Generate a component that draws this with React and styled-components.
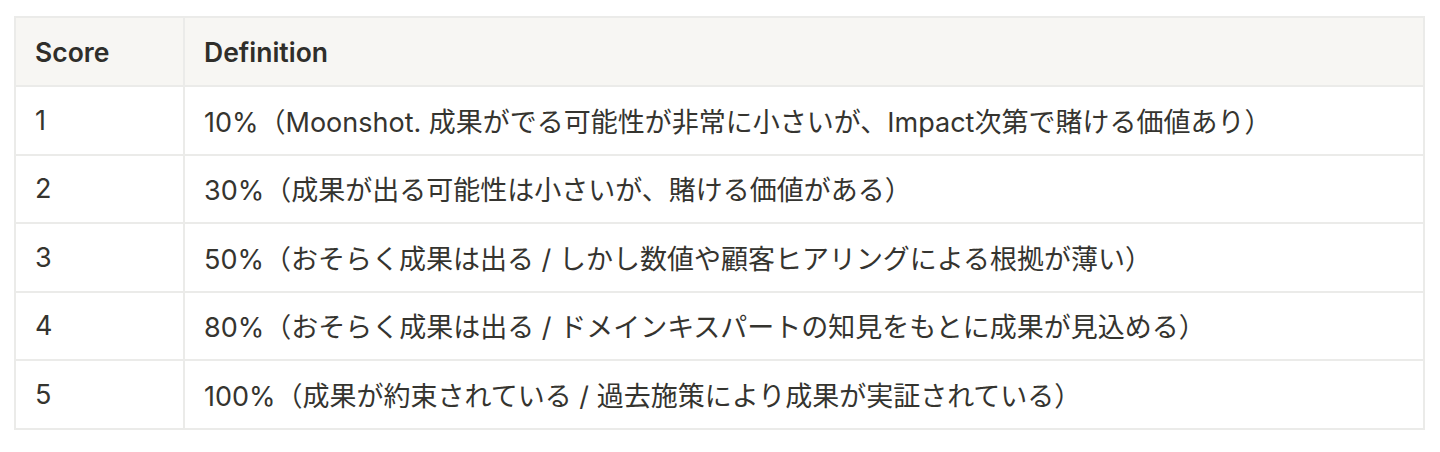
import React from "react";
import styled, { createGlobalStyle } from "styled-components";

const Global = createGlobalStyle`
  html, body { margin: 0; padding: 0; background: #ffffff; }
  body {
    font-family: Inter, "Noto Sans CJK JP", sans-serif;
    color: #37352f;
    -webkit-font-smoothing: antialiased;
  }
`;

const Page = styled.div`
  padding: 16px 15px 0 14px;
`;

const Table = styled.table`
  width: 100%;
  border-collapse: collapse;
  table-layout: fixed;
  border: 2px solid #ebebe9;
`;

const Col = styled.col`
  width: ${(p) => p.$w || "auto"};
`;

const HeadCell = styled.th`
  background: #f7f6f3;
  font-weight: 600;
  text-align: left;
  font-size: 26.5px;
  height: 67px;
  padding: 0 19px;
  border: 2px solid #ebebe9;
  color: #2f2e2a;
`;

const Cell = styled.td`
  font-size: 27px;
  font-weight: 400;
  height: 66.5px;
  padding: 0 19px;
  border: 2px solid #ebebe9;
  white-space: nowrap;
  color: #35342f;
`;

const rows = [
  ["1", "10%（Moonshot. 成果がでる可能性が非常に小さいが、Impact次第で賭ける価値あり）"],
  ["2", "30%（成果が出る可能性は小さいが、賭ける価値がある）"],
  ["3", "50%（おそらく成果は出る / しかし数値や顧客ヒアリングによる根拠が薄い）"],
  ["4", "80%（おそらく成果は出る / ドメインキスパートの知見をもとに成果が見込める）"],
  ["5", "100%（成果が約束されている / 過去施策により成果が実証されている）"],
];

export default function App() {
  return (
    <Page>
      <Global />
      <Table>
        <colgroup>
          <Col $w="169px" />
          <Col />
        </colgroup>
        <thead>
          <tr>
            <HeadCell>Score</HeadCell>
            <HeadCell>Definition</HeadCell>
          </tr>
        </thead>
        <tbody>
          {rows.map(([s, d]) => (
            <tr key={s}>
              <Cell>{s}</Cell>
              <Cell>{d}</Cell>
            </tr>
          ))}
        </tbody>
      </Table>
    </Page>
  );
}
